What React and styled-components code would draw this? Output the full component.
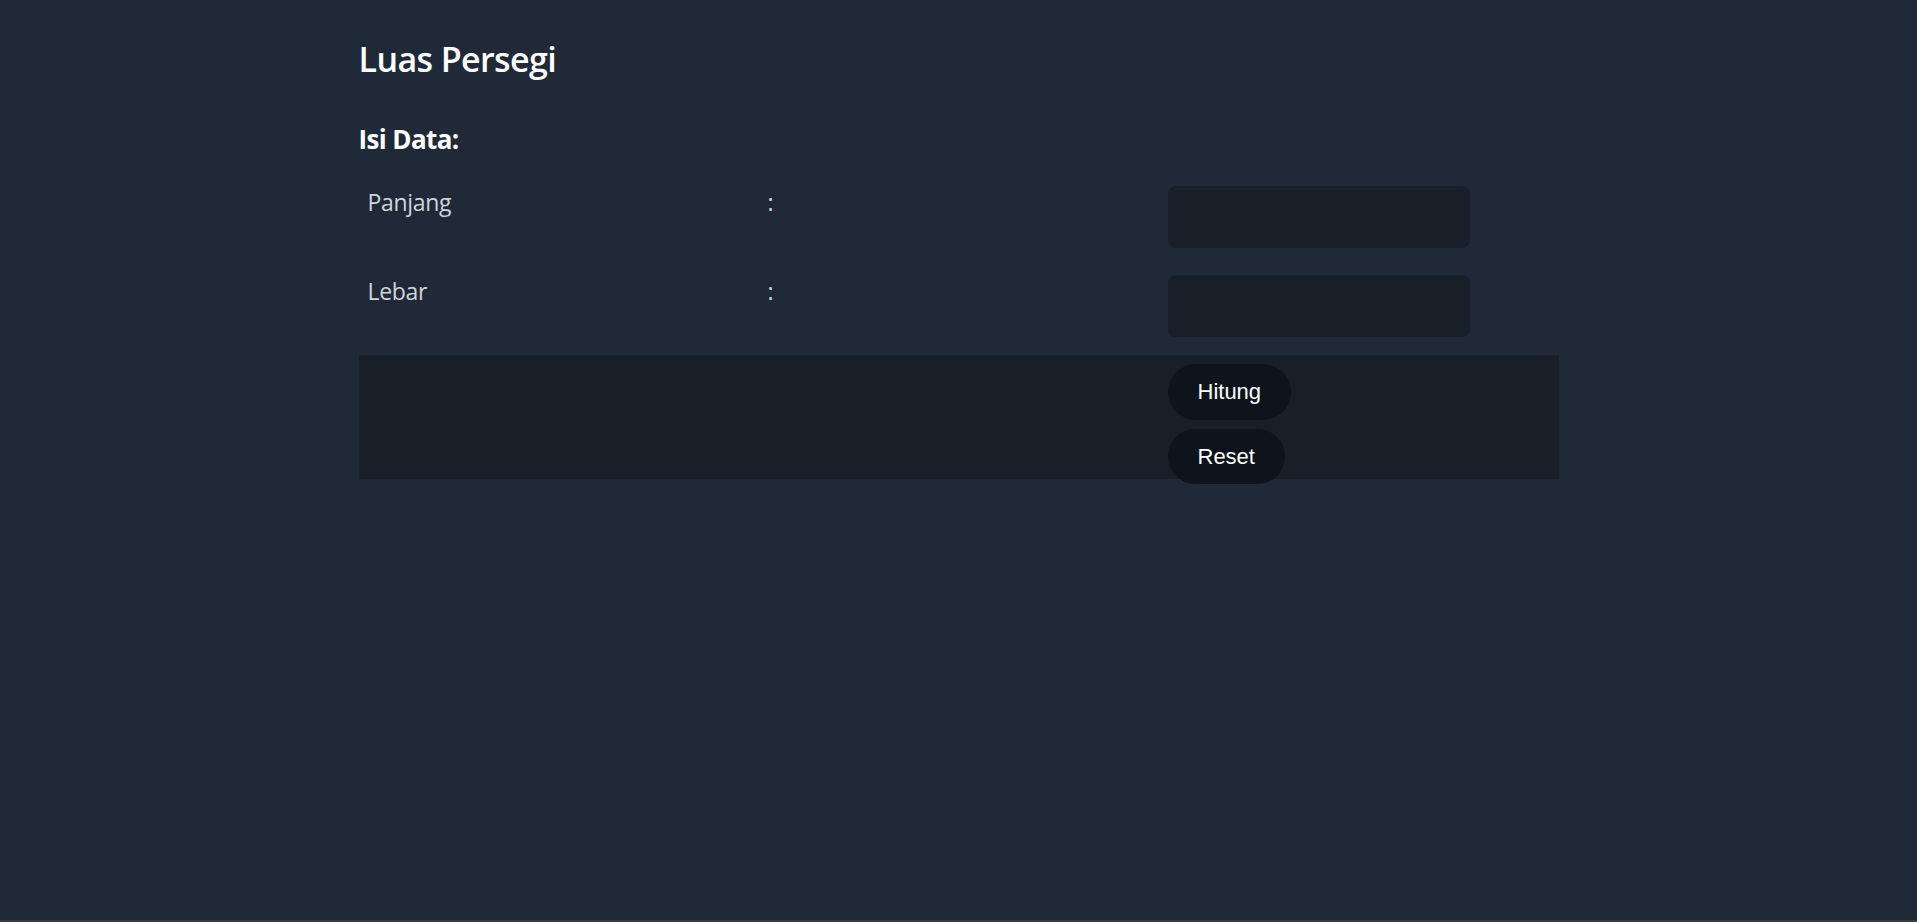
import React from "react";
import styled, { createGlobalStyle } from "styled-components";

const GlobalStyle = createGlobalStyle`
  html {
    background: #3c3d40;
  }
  body {
    margin: 0;
    min-height: calc(100vh - 2px);
    background: #1f2937;
    font-family: "Open Sans", "Noto Sans", sans-serif;
    color: #ffffff;
  }
`;

const Page = styled.main`
  width: 1200px;
  margin: 0 auto;
  padding-top: 37px;
`;

const Title = styled.h1`
  margin: 0;
  font-size: 34px;
  line-height: 44px;
  font-weight: 600;
  letter-spacing: -0.6px;
  color: #ffffff;
`;

const Subtitle = styled.h2`
  margin: 40px 0 0;
  font-size: 26px;
  line-height: 36px;
  font-weight: 700;
  letter-spacing: -0.6px;
  color: #ffffff;
`;

const Form = styled.form`
  margin-top: 29px;
  display: flex;
  flex-direction: column;
  gap: 27px;
`;

const Row = styled.div`
  display: grid;
  grid-template-columns: repeat(3, 1fr);
  column-gap: 18px;
  padding: 0 9px;
  align-items: start;
`;

const Band = styled(Row)`
  margin-top: -9px;
  height: 124px;
  padding-top: 9px;
  box-sizing: border-box;
  background: #181f28;
`;

const Label = styled.label`
  font-size: 23px;
  line-height: 32px;
  letter-spacing: -0.3px;
  color: #d1d5db;
`;

const Colon = styled.span`
  font-size: 23px;
  line-height: 32px;
  color: #d1d5db;
`;

const Input = styled.input`
  width: 302px;
  height: 62px;
  box-sizing: border-box;
  border: none;
  border-radius: 8px;
  background: #181f28;
  color: #ffffff;
  font-size: 22px;
  padding: 0 14px;
  outline: none;
`;

const Actions = styled.div`
  grid-column: 3;
  display: flex;
  flex-direction: column;
  align-items: flex-start;
  gap: 9px;
`;

const Button = styled.button`
  height: ${(p) => p.$h}px;
  padding: 0 30px;
  border: none;
  border-radius: 28px;
  background: #0d141b;
  color: #ffffff;
  font-family: "Liberation Sans", Arial, sans-serif;
  font-size: 22px;
  cursor: pointer;
`;

const fields = [
  { id: "panjang", label: "Panjang" },
  { id: "lebar", label: "Lebar" },
];

export default function App() {
  return (
    <>
      <GlobalStyle />
      <Page>
        <Title>Luas Persegi</Title>
        <Subtitle>Isi Data:</Subtitle>
        <Form onSubmit={(e) => e.preventDefault()}>
          {fields.map((f) => (
            <Row key={f.id}>
              <Label htmlFor={f.id}>{f.label}</Label>
              <Colon>:</Colon>
              <Input id={f.id} type="number" />
            </Row>
          ))}
          <Band>
            <Actions>
              <Button type="submit" $h={56}>Hitung</Button>
              <Button type="reset" $h={55}>Reset</Button>
            </Actions>
          </Band>
        </Form>
      </Page>
    </>
  );
}
